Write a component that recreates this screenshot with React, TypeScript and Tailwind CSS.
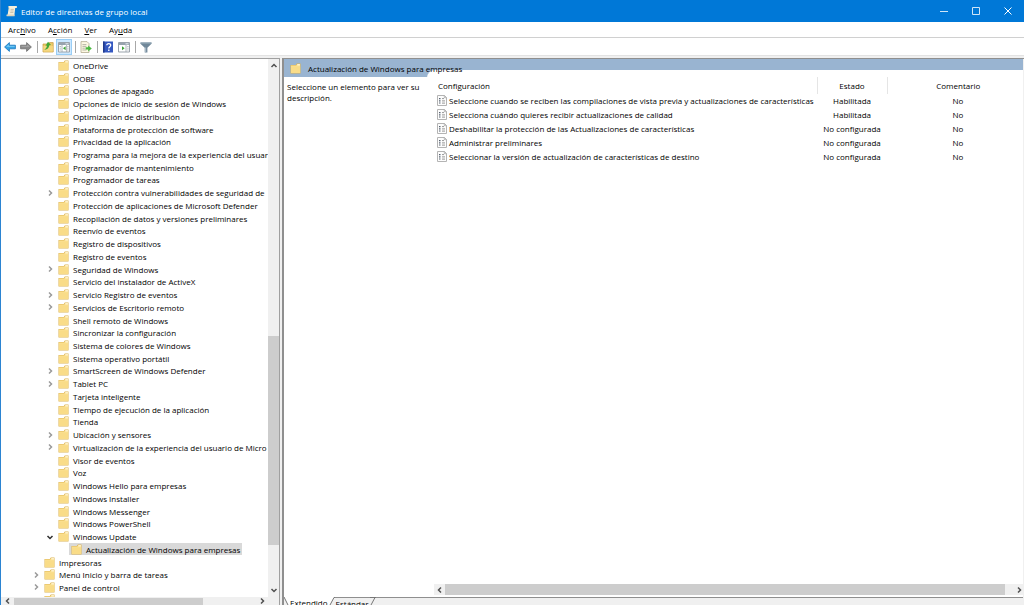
import React from "react";

type TreeItem = {
  name: string;
  level?: 1 | 2 | 3;
  state?: "open" | "closed";
  selected?: boolean;
};

const treeItems: TreeItem[] = [
  { name: "OneDrive" },
  { name: "OOBE" },
  { name: "Opciones de apagado" },
  { name: "Opciones de inicio de sesión de Windows" },
  { name: "Optimización de distribución" },
  { name: "Plataforma de protección de software" },
  { name: "Privacidad de la aplicación" },
  { name: "Programa para la mejora de la experiencia del usuari" },
  { name: "Programador de mantenimiento" },
  { name: "Programador de tareas" },
  { name: "Protección contra vulnerabilidades de seguridad de", state: "closed" },
  { name: "Protección de aplicaciones de Microsoft Defender" },
  { name: "Recopilación de datos y versiones preliminares" },
  { name: "Reenvío de eventos" },
  { name: "Registro de dispositivos" },
  { name: "Registro de eventos" },
  { name: "Seguridad de Windows", state: "closed" },
  { name: "Servicio del instalador de ActiveX" },
  { name: "Servicio Registro de eventos", state: "closed" },
  { name: "Servicios de Escritorio remoto", state: "closed" },
  { name: "Shell remoto de Windows" },
  { name: "Sincronizar la configuración" },
  { name: "Sistema de colores de Windows" },
  { name: "Sistema operativo portátil" },
  { name: "SmartScreen de Windows Defender", state: "closed" },
  { name: "Tablet PC", state: "closed" },
  { name: "Tarjeta inteligente" },
  { name: "Tiempo de ejecución de la aplicación" },
  { name: "Tienda" },
  { name: "Ubicación y sensores", state: "closed" },
  { name: "Virtualización de la experiencia del usuario de Micro", state: "closed" },
  { name: "Visor de eventos" },
  { name: "Voz" },
  { name: "Windows Hello para empresas" },
  { name: "Windows Installer" },
  { name: "Windows Messenger" },
  { name: "Windows PowerShell" },
  { name: "Windows Update", state: "open" },
  { name: "Actualización de Windows para empresas", level: 3, selected: true },
  { name: "Impresoras", level: 1 },
  { name: "Menú Inicio y barra de tareas", level: 1, state: "closed" },
  { name: "Panel de control", level: 1, state: "closed" },
];

const settings = [
  {
    name: "Seleccione cuando se reciben las compilaciones de vista previa y actualizaciones de características",
    state: "Habilitada",
    comment: "No",
  },
  { name: "Selecciona cuándo quieres recibir actualizaciones de calidad", state: "Habilitada", comment: "No" },
  {
    name: "Deshabilitar la protección de las Actualizaciones de características",
    state: "No configurada",
    comment: "No",
  },
  { name: "Administrar preliminares", state: "No configurada", comment: "No" },
  {
    name: "Seleccionar la versión de actualización de características de destino",
    state: "No configurada",
    comment: "No",
  },
];

const menus = [
  { before: "Arc", key: "h", after: "ivo" },
  { before: "A", key: "c", after: "ción" },
  { before: "", key: "V", after: "er" },
  { before: "Ay", key: "u", after: "da" },
];

const indent = { 1: "pl-[30px]", 2: "pl-[44px]", 3: "pl-[57px]" };

function FolderIcon() {
  return (
    <svg viewBox="0 0 11 11" className="h-[11px] w-[11px] shrink-0" aria-hidden="true">
      <path d="M.5 2h5.300L6.800.5h3.700v10H.5z" fill="#dcb454" />
      <path d="M1 2.500h5.200l1-1.300h2.900V10H1z" fill="#fbe08f" />
      <path d="M7.300 1.200h2.600v1.200H7.300z" fill="#fff7dc" />
      <path d="M1 3.600h9.100V10H1z" fill="#f9dc88" />
    </svg>
  );
}

function Chevron({ dir, color = "#505050" }: { dir: "up" | "down" | "left" | "right"; color?: string }) {
  const paths = {
    up: "M1.5 5 4 2.5 6.5 5",
    down: "M1.5 3 4 5.5 6.5 3",
    left: "M5 1.5 2.5 4 5 6.5",
    right: "M3 1.5 5.5 4 3 6.5",
  };
  return (
    <svg viewBox="0 0 8 8" className="h-2 w-2 shrink-0" fill="none" aria-hidden="true">
      <path d={paths[dir]} stroke={color} strokeWidth="1.5" />
    </svg>
  );
}

function SettingIcon() {
  return (
    <svg viewBox="0 0 10 11" className="h-[11px] w-[10px] shrink-0" aria-hidden="true">
      <path d="M.5.5h7l2 2v8h-9z" fill="#fdfdfd" stroke="#b4b4b4" />
      <path d="M7.3.5v2.2h2.2" fill="none" stroke="#9b9b9b" strokeWidth=".7" />
      <path d="M2 3h1.500v1.200H2zM2 5.200h1.500v1.200H2zM2 7.400h1.500v1.200H2z" fill="#55606f" />
      <path d="M5 3.600h2M5 5.900h3M5 8.100h3" stroke="#8a8a8a" strokeWidth=".9" />
    </svg>
  );
}

function ScrollIcon() {
  return (
    <svg viewBox="0 0 12 12" className="h-3 w-3" aria-hidden="true">
      <path d="M3 1h7.2c1 0 1.3 1.8.2 1.9H9.2L8.4 10H1.6z" fill="#f5efdc" />
      <path d="M3 1C1.8 1 1.8 2.8 3 2.8h.4L3 9" fill="#d8cfb4" />
      <path d="M.8 9.400h7.400c1 .2.8 1.900-.3 1.900H1.400C.2 11.300.2 9.600.8 9.400z" fill="#dcd3ba" />
      <path d="M4.6 4.400h3.200M4.400 6h3.200M4.200 7.600h3.200" stroke="#b7ae98" strokeWidth=".7" />
    </svg>
  );
}

function BackIcon() {
  return (
    <svg viewBox="0 0 12 12" className="h-3 w-3" aria-hidden="true">
      <path d="M.6 6 5.400 1.600v2.600h6v3.600h-6v2.600z" fill="#36a5e6" stroke="#1975bd" strokeWidth=".8" />
      <path d="M2.200 5.800 4.800 3.400v1.500h5.800v.9z" fill="#7fd0f7" />
    </svg>
  );
}

function ForwardIcon() {
  return (
    <svg viewBox="0 0 12 12" className="h-3 w-3" aria-hidden="true">
      <path d="M11.400 6 6.600 1.600v2.600h-6v3.600h6v2.600z" fill="#8b8b8b" stroke="#6d6d6d" strokeWidth=".8" />
      <path d="M9.800 5.800 7.200 3.400v1.500H1.400v.9z" fill="#a9a9a9" />
    </svg>
  );
}

function FolderUpIcon() {
  return (
    <svg viewBox="0 0 12 12" className="h-3 w-3" aria-hidden="true">
      <path d="M1 3h5.400l1-1.400h3.800V11H1z" fill="#eccb6c" stroke="#c79b3c" strokeWidth=".7" />
      <path d="M1.400 5h9.400v5.600H1.400z" fill="#f5d780" />
      <path d="M2.200 8.600C3.800 8.200 4.800 6.600 5 4.600L3.400 4.900 6 .8 9 4 7.300 4.200C7 7 5 9 2.200 8.600z" fill="#43a838" />
    </svg>
  );
}

function PaneIcon({ flipped = false }: { flipped?: boolean }) {
  return (
    <svg viewBox="0 0 12 12" className="h-3 w-3" aria-hidden="true">
      <path d="M.5 1.500h11v9.500H.5z" fill="#fff" stroke="#9aa3ab" />
      <path d="M1 2h10v2H1z" fill="#98a3ae" />
      <path d="M7.500 2.300h3v1h-3z" fill="#e9eef3" />
      <path d={flipped ? "M8 4v7" : "M4 4v7M8.600 4v7"} stroke="#9aa3ab" strokeWidth=".8" />
      <path d={flipped ? "M4 5.200v4L6.600 7.200z" : "M7.600 5.200v4L5 7.200z"} fill="#3ba336" />
      <path d="M9.200 5.500h1.400M9.200 7.200h1.400M9.200 9h1.400" stroke="#9aa3ab" strokeWidth=".7" />
      {!flipped && <path d="M1.500 5.500H3M1.500 7.200H3M1.500 9H3" stroke="#9aa3ab" strokeWidth=".7" />}
    </svg>
  );
}

function ExportIcon() {
  return (
    <svg viewBox="0 0 12 12" className="h-3 w-3" aria-hidden="true">
      <path d="M1 .6h6l2 2v8.900H1z" fill="#fdf8e3" stroke="#b3ab90" strokeWidth=".8" />
      <path d="M2.400 3.600h4M2.400 5.400h4M2.400 7.200h2.500M2.400 9h4" stroke="#9b9b8e" strokeWidth=".7" />
      <path d="M5.600 6.200h2.600V4.400L11.800 7.400 8.200 10.400V8.600H5.600z" fill="#49b83f" />
    </svg>
  );
}

function HelpIcon() {
  return (
    <svg viewBox="0 0 12 12" className="h-3 w-3" aria-hidden="true">
      <path d="M1 .5h10v11H1z" fill="#3558c0" />
      <path d="M1 .5h1.600v11H1z" fill="#20398b" />
      <path
        d="M4.800 4.300c0-2.300 3.900-2.300 3.900 0 0 1.500-1.900 1.500-1.900 3.200"
        fill="none"
        stroke="#fff"
        strokeWidth="1.300"
      />
      <path d="M6.100 8.600h1.400v1.400H6.100z" fill="#fff" />
    </svg>
  );
}

function FilterIcon() {
  return (
    <svg viewBox="0 0 12 12" className="h-3 w-3" aria-hidden="true">
      <path d="M.5 1.500h11v1.300L7.400 6.800v4.700H4.700V6.800L.5 2.800z" fill="#6f8799" />
      <path d="M.5 1.500h11v1.200H.5z" fill="#91a5b4" />
      <path d="M5.200 6.600h.9v4.500h-.9z" fill="#b5c4cf" />
    </svg>
  );
}

function ToolButton({ label, active, children }: { label: string; active?: boolean; children: React.ReactNode }) {
  return (
    <button
      aria-label={label}
      className={
        active
          ? "flex h-4 w-4 items-center justify-center bg-[#cce8ff] outline outline-1 -outline-offset-1 outline-[#99cdf5]"
          : "flex h-4 w-4 items-center justify-center"
      }
    >
      {children}
    </button>
  );
}

function Separator() {
  return <div className="ml-[3px] mr-[2px] h-3 w-px bg-[#a8a8a8]" />;
}

function TreeRow({ item }: { item: TreeItem }) {
  return (
    <li className={`flex min-h-0 flex-1 items-center ${indent[item.level ?? 2]}`}>
      <span className="flex w-[11px] shrink-0 items-center pl-px">
        {item.state === "closed" && <Chevron dir="right" color="#9a9a9a" />}
        {item.state === "open" && <Chevron dir="down" color="#303030" />}
      </span>
      <span
        className={`flex h-[12px] items-center gap-1 whitespace-nowrap px-[2px] ${item.selected ? "bg-[#d9d9d9]" : ""}`}
      >
        <FolderIcon />
        {item.name}
      </span>
    </li>
  );
}

export default function App() {
  return (
    <div className="flex h-screen flex-col overflow-hidden border-l border-[#2b84d2] bg-[#f0f0f0] font-['Open_Sans',sans-serif] text-[8px] leading-[11px] text-black">
      <header className="flex h-[22px] shrink-0 items-center bg-[#0078d7] pl-[5px] text-white">
        <ScrollIcon />
        <h1 className="ml-[3px] flex-1">Editor de directivas de grupo local</h1>
        <button aria-label="Minimizar" className="flex h-full w-8 items-center justify-center">
          <svg viewBox="0 0 8 8" className="h-2 w-2"><path d="M0 4.500h8" stroke="#cfe5f7" /></svg>
        </button>
        <button aria-label="Maximizar" className="flex h-full w-8 items-center justify-center">
          <svg viewBox="0 0 8 8" className="h-2 w-2"><path d="M.5.5h7v7h-7z" fill="none" stroke="#cfe5f7" /></svg>
        </button>
        <button aria-label="Cerrar" className="flex h-full w-8 items-center justify-center">
          <svg viewBox="0 0 8 8" className="h-2 w-2"><path d="m.5.5 7 7m0-7-7 7" stroke="#fff" /></svg>
        </button>
      </header>

      <nav className="flex h-4 shrink-0 items-center gap-3 border-b border-[#d0d0d0] bg-white pl-[7px]">
        {menus.map((menu) => (
          <button key={menu.key}>
            {menu.before}
            <span className="underline">{menu.key}</span>
            {menu.after}
          </button>
        ))}
      </nav>

      <div className="flex h-[17px] shrink-0 items-center bg-white pl-px pt-px">
        <ToolButton label="Atrás"><BackIcon /></ToolButton>
        <ToolButton label="Adelante"><ForwardIcon /></ToolButton>
        <Separator />
        <ToolButton label="Subir un nivel"><FolderUpIcon /></ToolButton>
        <ToolButton label="Mostrar árbol de consola" active><PaneIcon /></ToolButton>
        <Separator />
        <ToolButton label="Exportar lista"><ExportIcon /></ToolButton>
        <Separator />
        <ToolButton label="Ayuda"><HelpIcon /></ToolButton>
        <ToolButton label="Mostrar panel de acciones"><PaneIcon flipped /></ToolButton>
        <Separator />
        <ToolButton label="Filtro"><FilterIcon /></ToolButton>
      </div>

      <main className="flex min-h-0 flex-1 border-t border-[#e3e3e3] pt-[2px]">
        {/* Console tree */}
        <aside className="flex w-[279px] shrink-0 flex-col border-r border-t border-[#a0a0a0] bg-white">
          <div className="flex min-h-0 flex-1">
            <ul className="flex min-w-0 flex-1 flex-col">
              {treeItems.map((item) => (
                <TreeRow key={item.name} item={item} />
              ))}
              <li className="h-[3px] shrink-0 overflow-hidden pl-[43px]">
                <FolderIcon />
              </li>
            </ul>
            <div className="flex w-[11px] shrink-0 flex-col items-center bg-[#f0f0f0]">
              <button aria-label="Desplazar arriba" className="flex h-[14px] items-center"><Chevron dir="up" /></button>
              <div className="flex w-full flex-1 flex-col">
                <div className="flex-[263]" />
                <div className="flex-[209] bg-[#cdcdcd]" />
                <div className="flex-[38]" />
              </div>
              <button aria-label="Desplazar abajo" className="flex h-[14px] items-center"><Chevron dir="down" /></button>
            </div>
          </div>
          <div className="flex h-2 shrink-0 items-end bg-[#f0f0f0]">
            <button aria-label="Desplazar a la izquierda" className="flex w-[13px] justify-center"><Chevron dir="left" /></button>
            <div className="flex h-[7px] flex-1">
              <div className="flex-[189] bg-[#cdcdcd]" />
              <div className="flex-[52]" />
            </div>
            <button aria-label="Desplazar a la derecha" className="flex w-[13px] justify-center"><Chevron dir="right" /></button>
            <div className="w-[11px]" />
          </div>
        </aside>

        {/* Result pane */}
        <section className="ml-[2px] flex min-w-0 flex-1 flex-col border-l-2 border-t border-[#8f8f8f] pr-px">
          <div className="flex min-h-0 flex-1 flex-col bg-white">
            <div className="flex h-[18px] shrink-0 items-center bg-[#99b4d1] pl-[6px]">
              <FolderIcon />
              <h2 className="relative z-10 ml-[7px]">Actualización de Windows para empresas</h2>
            </div>
            <div className="flex min-h-0 flex-1">
              <p className="w-[143px] shrink-0 pl-[3px] pt-1">Seleccione un elemento para ver su descripción.</p>
              <div className="-mt-[7px] flex min-w-0 flex-1 flex-col rounded-tl-lg bg-white pl-[7px] pt-[7px]">
                <table className="h-[86px] w-full table-fixed">
                  <thead>
                    <tr className="h-[17px]">
                      <th className="border-r border-[#e5e5e5] p-0 pl-1 text-left font-normal">Configuración</th>
                      <th className="w-[70px] border-r border-[#e5e5e5] p-0 font-normal">Estado</th>
                      <th className="w-[136px] p-0 pl-[6px] font-normal">Comentario</th>
                    </tr>
                  </thead>
                  <tbody>
                    {settings.map((setting) => (
                      <tr key={setting.name}>
                        <td className="p-0 pl-[3px]">
                          <span className="flex items-center gap-[2px] whitespace-nowrap">
                            <SettingIcon />
                            {setting.name}
                          </span>
                        </td>
                        <td className="whitespace-nowrap p-0 text-center">{setting.state}</td>
                        <td className="p-0 pl-[6px] text-center">{setting.comment}</td>
                      </tr>
                    ))}
                  </tbody>
                </table>
                <div className="mb-[2px] mt-auto flex h-[11px] bg-[#f0f0f0]">
                  <button aria-label="Lista a la izquierda" className="flex w-[11px] items-center justify-center"><Chevron dir="left" /></button>
                  <div className="flex-1 bg-[#cdcdcd]" />
                  <button aria-label="Lista a la derecha" className="flex w-[18px] items-center justify-end"><Chevron dir="right" /></button>
                </div>
              </div>
            </div>
          </div>
          <div className="flex h-2 shrink-0 overflow-hidden">
            <button className="flex bg-white">
              <svg viewBox="0 0 5 8" className="h-2 w-[5px]"><path d="M0 0v8h4z" fill="#f0f0f0" /><path d="m0 0 4 8" stroke="#777" /></svg>
              <span className="px-px">Extendido</span>
            </button>
            <svg viewBox="0 0 6 8" className="h-2 w-[6px] shrink-0"><path d="M0 0h5L1 8H0z" fill="#fff" /><path d="M6 .5H5L1 8" fill="none" stroke="#777" /></svg>
            <button className="flex border-t border-[#8f8f8f] px-px">Estándar</button>
            <svg viewBox="0 0 6 8" className="h-2 w-[6px] shrink-0"><path d="M0 .5h6M5 .5 1 8" fill="none" stroke="#777" /></svg>
            <div className="flex-1 border-t border-[#8f8f8f]" />
          </div>
        </section>
      </main>
    </div>
  );
}
